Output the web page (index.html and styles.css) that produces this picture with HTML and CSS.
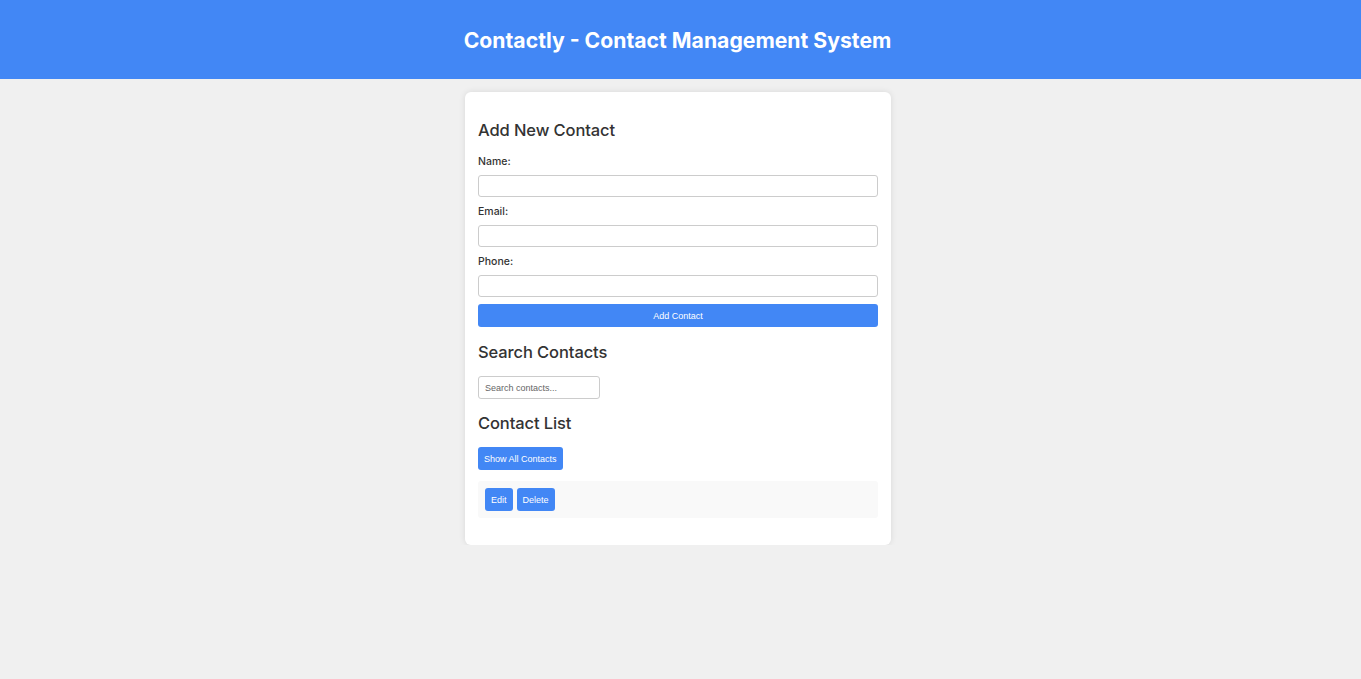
FILE: index.html
```html
<!DOCTYPE html>
<html>
<head>
<meta charset="utf-8">
<link rel="stylesheet" href="styles.css">
</head>
<body>
<header class="topbar"><h1 class="title">Contactly - Contact Management System</h1></header>
<div class="page">
<main class="card">
  <h2 class="heading">Add New Contact</h2>
  <label class="label">Name:</label>
  <input class="field" type="text">
  <label class="label">Email:</label>
  <input class="field" type="text">
  <label class="label">Phone:</label>
  <input class="field" type="text">
  <button class="btn btn-full">Add Contact</button>
  <h2 class="heading heading-gap">Search Contacts</h2>
  <input class="search" type="text" placeholder="Search contacts...">
  <h2 class="heading heading-gap2">Contact List</h2>
  <div class="row"><button class="btn btn-show">Show All Contacts</button></div>
  <div class="item">
    <button class="btn btn-small">Edit</button>
    <button class="btn btn-small">Delete</button>
  </div>
</main>
</div>
</body>
</html>
```
FILE: styles.css
```css
* { box-sizing: border-box; }
body {
  margin: 0;
  background: #f0f0f0;
  font-family: Inter, "Noto Sans", sans-serif;
  color: #333;
}
.topbar {
  height: 79px;
  background: #4287f5;
  display: flex;
  align-items: center;
  justify-content: center;
  padding-right: 6px;
}
.title {
  margin: 0;
  color: #fff;
  font-size: 21.2px;
  font-weight: 700;
  letter-spacing: 0;
  padding-top: 0;
}
.page { padding-right: 5px; }
.card {
  width: 426px;
  margin: 13px auto 0;
  background: #fff;
  border-radius: 6px;
  box-shadow: 0 0 6px rgba(0,0,0,0.1);
  padding: 28px 13px 27px;
  display: flex;
  flex-direction: column;
}
.heading {
  margin: 0 0 14px;
  font-size: 16.5px;
  font-weight: 500;
  line-height: 20px;
  color: #333;
  letter-spacing: -0.1px;
}
.heading-gap { margin-top: 15px; }
.heading-gap2 { margin-top: 14px; }
.label {
  font-size: 10.5px;
  font-weight: 500;
  line-height: 14px;
  padding-top: 1px;
  margin-bottom: 6px;
  color: #333;
}
.field {
  height: 22px;
  width: 100%;
  border: 1px solid #ccc;
  border-radius: 3px;
  margin: 0 0 7px;
  padding: 0 6px;
  font-family: "Liberation Sans", Arial, sans-serif;
}
.btn {
  background: #4287f5;
  color: #fff;
  border: none;
  border-radius: 3px;
  font-family: "Liberation Sans", Arial, sans-serif;
  font-size: 9px;
  cursor: pointer;
  padding: 0;
}
.btn-full { width: 100%; height: 23px; }
.search {
  width: 122px;
  height: 23px;
  border: 1px solid #ccc;
  border-radius: 3px;
  padding: 0 6px;
  margin: 0;
  font-family: "Liberation Sans", Arial, sans-serif;
  font-size: 9px;
  color: #333;
}
.search::placeholder { color: #666; }
.row { display: flex; }
.btn-show { height: 23px; padding: 0 6px; }
.item {
  margin-top: 11px;
  height: 37px;
  background: #f9f9f9;
  border-radius: 3px;
  padding: 7px 7px;
  display: flex;
  gap: 4px;
}
.btn-small { height: 23px; padding: 0 6px; }
```
